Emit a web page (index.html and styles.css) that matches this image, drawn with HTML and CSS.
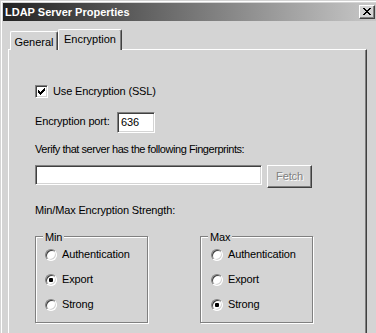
FILE: index.html
```html
<!DOCTYPE html>
<html lang="en">
<head>
  <meta charset="UTF-8">
  <title>LDAP Server Properties</title>
  <link rel="stylesheet" href="styles.css">
</head>
<body>
  <div class="window">
    <div class="titlebar">
      <span class="title">LDAP Server Properties</span>
      <span class="close">
        <svg width="8" height="7" viewBox="0 0 8 7"><path fill="#000" d="M0 0h2v1H0zM6 0h2v1H6zM1 1h2v1H1zM5 1h2v1H5zM2 2h4v1H2zM3 3h2v1H3zM2 4h4v1H2zM1 5h2v1H1zM5 5h2v1H5zM0 6h2v1H0zM6 6h2v1H6z"/></svg>
      </span>
    </div>

    <div class="dialog">
      <div class="tabs">
        <div class="tab">General</div>
        <div class="tab active">Encryption</div>
      </div>

      <div class="panel">
        <div class="row check-row">
          <span class="checkbox">
            <svg width="7" height="7" viewBox="0 0 7 7"><path fill="#000" d="M6 0h1v1H6zM5 1h2v1H5zM0 2h1v1H0zM4 2h3v1H4zM0 3h2v1H0zM3 3h3v1H3zM0 4h5v1H0zM1 5h3v1H1zM2 6h1v1H2z"/></svg>
          </span>
          <span>Use Encryption (SSL)</span>
        </div>

        <div class="row port-row">
          <span class="port-label">Encryption port:</span>
          <span class="field port">636</span>
        </div>

        <p class="text verify">Verify that server has the following Fingerprints:</p>

        <div class="row fp-row">
          <span class="field fingerprint"></span>
          <span class="button disabled">Fetch</span>
        </div>

        <p class="text strength">Min/Max Encryption Strength:</p>

        <div class="groups">
          <div class="group">
            <span class="group-label">Min</span>
            <div class="radio-row"><span class="radio"></span>Authentication</div>
            <div class="radio-row"><span class="radio checked"><span class="dot"></span></span>Export</div>
            <div class="radio-row"><span class="radio"></span>Strong</div>
          </div>
          <div class="group group-max">
            <span class="group-label">Max</span>
            <div class="radio-row"><span class="radio"></span>Authentication</div>
            <div class="radio-row"><span class="radio"></span>Export</div>
            <div class="radio-row"><span class="radio checked"><span class="dot"></span></span>Strong</div>
          </div>
        </div>
      </div>
    </div>
  </div>
</body>
</html>
```

FILE: styles.css
```css
html, body {
  margin: 0;
  padding: 0;
}
body {
  width: 376px;
  height: 333px;
  overflow: hidden;
  background: #d4d4d4;
  font-family: 'Liberation Sans', Arial, sans-serif;
  font-size: 11px;
  line-height: 13px;
  color: #000;
}

/* Рамка окна */
.window {
  width: 380px;
  height: 340px;
  box-sizing: border-box;
  border-top: 1px solid #d4d4d4;
  border-left: 1px solid #d4d4d4;
  box-shadow: inset 1px 1px 0 #fff;
  padding: 1px 0 0 1px;
  background: #d4d4d4;
}
.titlebar {
  margin: 1px 0 0 1px;
  height: 18px;
  display: flex;
  align-items: center;
  justify-content: space-between;
  background: linear-gradient(90deg, #222 0%, #cacaca 100%);
}
.title {
  color: #fff;
  font-weight: 700;
  padding-left: 2px;
}
.close {
  width: 16px;
  height: 14px;
  box-sizing: border-box;
  margin-right: 5px;
  padding: 2px 0 0 3px;
  background: #d4d4d4;
  border: 1px solid;
  border-color: #fff #404040 #404040 #fff;
  box-shadow: inset -1px -1px 0 #808080;
}
.close svg {
  display: block;
}

/* Вкладки */
.dialog {
  padding: 8px 0 0 6px;
}
.tabs {
  display: flex;
  align-items: flex-end;
  padding-left: 2px;
  margin-bottom: -1px;
}
.tab {
  height: 19px;
  box-sizing: border-box;
  width: 48px;
  text-align: center;
  padding-top: 4px;
  border-top: 1px solid #fff;
  border-left: 1px solid #fff;
  border-right: 1px solid #404040;
  border-radius: 2px 2px 0 0;
  box-shadow: inset -1px 0 0 #808080;
  background: #d4d4d4;
}
.tab.active {
  width: 64px;
  height: 21px;
  padding-top: 3px;
  position: relative;
  z-index: 1;
}
.panel {
  width: 359px;
  height: 300px;
  box-sizing: border-box;
  border-top: 1px solid #fff;
  border-left: 1px solid #fff;
  border-right: 1px solid #404040;
  box-shadow: inset -1px 0 0 #808080;
  padding-left: 26px;
  letter-spacing: -0.15px;
  display: flex;
  flex-direction: column;
  align-items: flex-start;
}

.row {
  display: flex;
}
.check-row {
  margin-top: 35px;
  align-items: center;
  gap: 5px;
}
.checkbox {
  width: 13px;
  height: 13px;
  box-sizing: border-box;
  padding: 2px;
  background: #fff;
  border: 1px solid;
  border-color: #808080 #fff #fff #808080;
  box-shadow: inset 1px 1px 0 #404040, inset -1px -1px 0 #d4d4d4;
  display: flex;
  align-items: center;
  justify-content: center;
}
.checkbox svg {
  display: block;
}

.field {
  box-sizing: border-box;
  background: #fff;
  border: 1px solid;
  border-color: #808080 #fff #fff #808080;
  box-shadow: inset 1px 1px 0 #404040, inset -1px -1px 0 #d4d4d4;
}
.port-row {
  margin-top: 14px;
  align-items: flex-start;
}
.port-label {
  width: 82px;
  padding-top: 3px;
}
.port {
  width: 38px;
  height: 21px;
  padding: 3px 0 0 3px;
}

.text {
  margin: 0;
}
.verify {
  margin-top: 10px;
  letter-spacing: -0.45px;
}
.fp-row {
  margin-top: 9px;
  align-items: flex-start;
  gap: 5px;
}
.fingerprint {
  width: 227px;
  height: 20px;
}
.button {
  width: 45px;
  height: 23px;
  box-sizing: border-box;
  display: flex;
  align-items: center;
  justify-content: center;
  border: 1px solid;
  border-color: #fff #404040 #404040 #fff;
  box-shadow: inset -1px -1px 0 #808080;
}
.button.disabled {
  color: #808080;
  text-shadow: 1px 1px 0 #fff;
}
.strength {
  margin-top: 16px;
}

/* Группы переключателей */
.groups {
  margin-top: 19px;
  display: flex;
  gap: 52px;
}
.group {
  width: 113px;
  box-sizing: border-box;
  position: relative;
  border: 1px solid #808080;
  box-shadow: inset 1px 1px 0 #fff, 1px 1px 0 #fff;
  padding: 11px 0 11px 9px;
  display: flex;
  flex-direction: column;
  gap: 12px;
}
.group-max {
  padding-left: 10px;
}
.group-label {
  position: absolute;
  top: -6px;
  left: 7px;
  padding: 0 2px;
  background: #d4d4d4;
}
.radio-row {
  display: flex;
  align-items: center;
  gap: 5px;
  height: 13px;
}
.radio {
  width: 12px;
  height: 12px;
  box-sizing: border-box;
  border-radius: 50%;
  background: #fff;
  border: 1px solid;
  border-color: #808080 #fff #fff #808080;
  box-shadow: inset 1px 1px 0 #404040, inset -1px -1px 0 #d4d4d4;
  display: flex;
  align-items: center;
  justify-content: center;
}
.dot {
  width: 4px;
  height: 4px;
  border-radius: 1px;
  background: #000;
}
```
